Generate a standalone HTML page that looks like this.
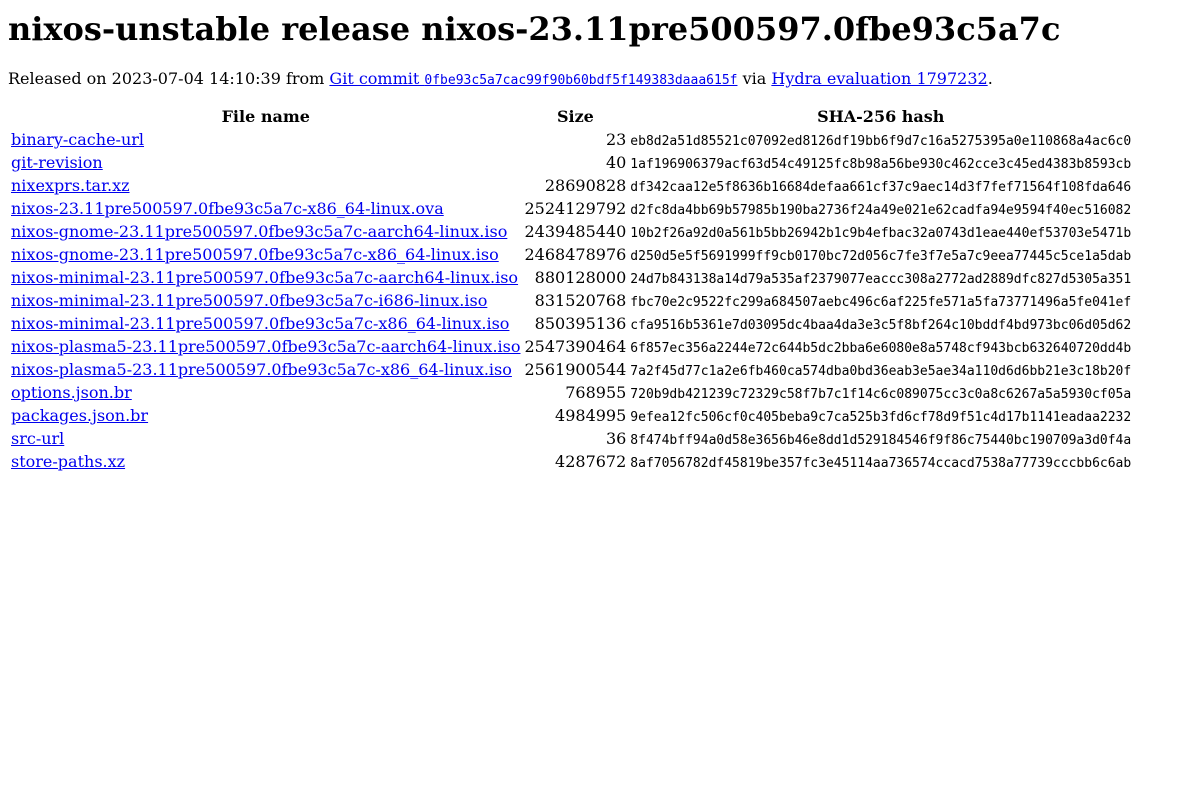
<!DOCTYPE html>
<html><head><meta charset="utf-8"><style>
body{margin:8px;font-family:"DejaVu Serif",serif;font-size:16px;color:#000;background:#fff}
h1{font-size:32px;margin:0 0 21px 0;padding-top:2px;font-weight:bold}
p{margin:0 0 16px 0}
a{color:#0000ee}
tt{font-family:"DejaVu Sans Mono",monospace;font-size:13px}
table{border-spacing:2px}
td,th{padding:1px}
td.s{text-align:right}
</style></head><body>
<h1>nixos-unstable release nixos-23.11pre500597.0fbe93c5a7c</h1>
<p>Released on 2023-07-04 14:10:39 from <a href="#">Git commit <tt>0fbe93c5a7cac99f90b60bdf5f149383daaa615f</tt></a> via <a href="#">Hydra evaluation 1797232</a>.</p>
<table>
<tr><th>File name</th><th>Size</th><th>SHA-256 hash</th></tr>
<tr><td><a href="#">binary-cache-url</a></td><td class="s">23</td><td><tt>eb8d2a51d85521c07092ed8126df19bb6f9d7c16a5275395a0e110868a4ac6c0</tt></td></tr>
<tr><td><a href="#">git-revision</a></td><td class="s">40</td><td><tt>1af196906379acf63d54c49125fc8b98a56be930c462cce3c45ed4383b8593cb</tt></td></tr>
<tr><td><a href="#">nixexprs.tar.xz</a></td><td class="s">28690828</td><td><tt>df342caa12e5f8636b16684defaa661cf37c9aec14d3f7fef71564f108fda646</tt></td></tr>
<tr><td><a href="#">nixos-23.11pre500597.0fbe93c5a7c-x86_64-linux.ova</a></td><td class="s">2524129792</td><td><tt>d2fc8da4bb69b57985b190ba2736f24a49e021e62cadfa94e9594f40ec516082</tt></td></tr>
<tr><td><a href="#">nixos-gnome-23.11pre500597.0fbe93c5a7c-aarch64-linux.iso</a></td><td class="s">2439485440</td><td><tt>10b2f26a92d0a561b5bb26942b1c9b4efbac32a0743d1eae440ef53703e5471b</tt></td></tr>
<tr><td><a href="#">nixos-gnome-23.11pre500597.0fbe93c5a7c-x86_64-linux.iso</a></td><td class="s">2468478976</td><td><tt>d250d5e5f5691999ff9cb0170bc72d056c7fe3f7e5a7c9eea77445c5ce1a5dab</tt></td></tr>
<tr><td><a href="#">nixos-minimal-23.11pre500597.0fbe93c5a7c-aarch64-linux.iso</a></td><td class="s">880128000</td><td><tt>24d7b843138a14d79a535af2379077eaccc308a2772ad2889dfc827d5305a351</tt></td></tr>
<tr><td><a href="#">nixos-minimal-23.11pre500597.0fbe93c5a7c-i686-linux.iso</a></td><td class="s">831520768</td><td><tt>fbc70e2c9522fc299a684507aebc496c6af225fe571a5fa73771496a5fe041ef</tt></td></tr>
<tr><td><a href="#">nixos-minimal-23.11pre500597.0fbe93c5a7c-x86_64-linux.iso</a></td><td class="s">850395136</td><td><tt>cfa9516b5361e7d03095dc4baa4da3e3c5f8bf264c10bddf4bd973bc06d05d62</tt></td></tr>
<tr><td><a href="#">nixos-plasma5-23.11pre500597.0fbe93c5a7c-aarch64-linux.iso</a></td><td class="s">2547390464</td><td><tt>6f857ec356a2244e72c644b5dc2bba6e6080e8a5748cf943bcb632640720dd4b</tt></td></tr>
<tr><td><a href="#">nixos-plasma5-23.11pre500597.0fbe93c5a7c-x86_64-linux.iso</a></td><td class="s">2561900544</td><td><tt>7a2f45d77c1a2e6fb460ca574dba0bd36eab3e5ae34a110d6d6bb21e3c18b20f</tt></td></tr>
<tr><td><a href="#">options.json.br</a></td><td class="s">768955</td><td><tt>720b9db421239c72329c58f7b7c1f14c6c089075cc3c0a8c6267a5a5930cf05a</tt></td></tr>
<tr><td><a href="#">packages.json.br</a></td><td class="s">4984995</td><td><tt>9efea12fc506cf0c405beba9c7ca525b3fd6cf78d9f51c4d17b1141eadaa2232</tt></td></tr>
<tr><td><a href="#">src-url</a></td><td class="s">36</td><td><tt>8f474bff94a0d58e3656b46e8dd1d529184546f9f86c75440bc190709a3d0f4a</tt></td></tr>
<tr><td><a href="#">store-paths.xz</a></td><td class="s">4287672</td><td><tt>8af7056782df45819be357fc3e45114aa736574ccacd7538a77739cccbb6c6ab</tt></td></tr>
</table>
</body></html>
